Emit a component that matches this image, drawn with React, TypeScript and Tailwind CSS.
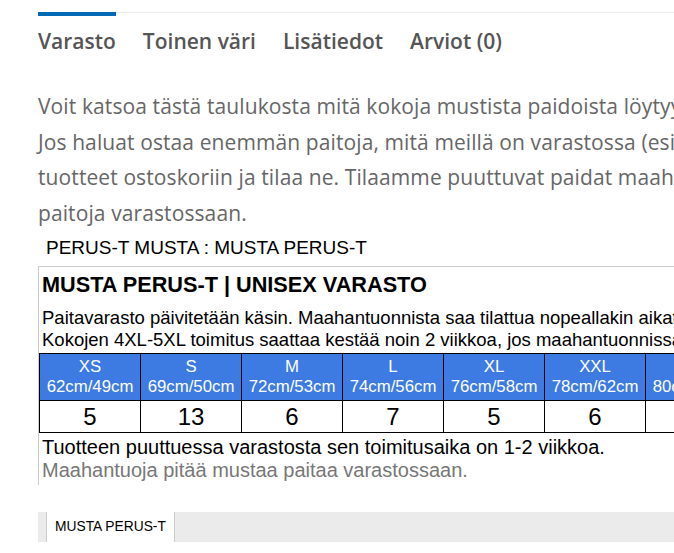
import React from 'react'

const sizes = [
  { size: 'XS', dims: '62cm/49cm', stock: '5' },
  { size: 'S', dims: '69cm/50cm', stock: '13' },
  { size: 'M', dims: '72cm/53cm', stock: '6' },
  { size: 'L', dims: '74cm/56cm', stock: '7' },
  { size: 'XL', dims: '76cm/58cm', stock: '5' },
  { size: 'XXL', dims: '78cm/62cm', stock: '6' },
  { size: '3XL', dims: '80cm/66cm', stock: '' },
  { size: '4XL', dims: '82cm/70cm', stock: '' },
]

const tabs = ['Varasto', 'Toinen väri', 'Lisätiedot', 'Arviot (0)']

export default function App() {
  return (
    <div className="h-[553px] w-[674px] overflow-hidden bg-white">
      <div className="w-[900px] pl-[38px]">
        {/* tabs */}
        <div className="mt-[12px] h-px w-full bg-[#ececec]" />
        <div className="flex gap-[27px] font-['Open_Sans',sans-serif] text-[21px] font-semibold leading-[30px] text-[#555]">
          {tabs.map((tab, i) => (
            <div key={tab} className="relative pt-[13px]">
              {i === 0 && <div className="absolute -top-px left-0 h-[4px] w-full bg-[#0068b4]" />}
              {tab}
            </div>
          ))}
        </div>

        {/* intro */}
        <div className="mt-[33px] whitespace-nowrap font-['Open_Sans',sans-serif] text-[21px] leading-[35.5px] tracking-[0.1px] text-[#666]">
          <p>Voit katsoa tästä taulukosta mitä kokoja mustista paidoista löytyy varastostamme.</p>
          <p>Jos haluat ostaa enemmän paitoja, mitä meillä on varastossa (esim. 20 kpl), lisää</p>
          <p>tuotteet ostoskoriin ja tilaa ne. Tilaamme puuttuvat paidat maahantuojalta, joka pitää</p>
          <p>paitoja varastossaan.</p>
        </div>

        <div className="mt-[6px] pl-[8px] font-['Liberation_Sans',Arial,sans-serif] text-[19px] leading-[22px] text-black">
          PERUS-T MUSTA : MUSTA PERUS-T
        </div>

        {/* stock box */}
        <div className="mt-[7px] border-l border-t border-[#ccc] pb-[3px] font-['Liberation_Sans',Arial,sans-serif] whitespace-nowrap text-black">
          <div className="pl-[3px] pt-[6px] text-[21.7px] font-bold leading-[24px]">MUSTA PERUS-T | UNISEX VARASTO</div>
          <div className="mt-[10px] pl-[3px] text-[18.5px] leading-[22px]">
            <p>Paitavarasto päivitetään käsin. Maahantuonnista saa tilattua nopeallakin aikataululla.</p>
            <p>Kokojen 4XL-5XL toimitus saattaa kestää noin 2 viikkoa, jos maahantuonnissa on niitä.</p>
          </div>
          <table className="mt-[2px] border-collapse">
            <thead>
              <tr className="bg-[#3d7be2] text-white">
                {sizes.map((s) => (
                  <th key={s.size} className="h-[47px] w-[101px] border border-black p-0 text-center text-[16.8px] font-normal leading-[20px]">
                    <div>{s.size}</div>
                    <div>{s.dims}</div>
                  </th>
                ))}
              </tr>
            </thead>
            <tbody>
              <tr>
                {sizes.map((s) => (
                  <td key={s.size} className="h-[32px] border border-black p-0 text-center text-[24px] leading-[28px]">
                    {s.stock}
                  </td>
                ))}
              </tr>
            </tbody>
          </table>
          <div className="pl-[3px] pt-[3px] text-[20px] leading-[23px]">
            <p>Tuotteen puuttuessa varastosta sen toimitusaika on 1-2 viikkoa.</p>
            <p className="text-[#777]">Maahantuoja pitää mustaa paitaa varastossaan.</p>
          </div>
        </div>

        {/* bottom tab strip */}
        <div className="mt-[27px] flex h-[30px] bg-[#ebebeb] pl-[8px] font-['Liberation_Sans',Arial,sans-serif]">
          <div className="flex items-center border-x border-[#ccc] bg-white px-[8px] text-[13.8px] text-black">
            MUSTA PERUS-T
          </div>
        </div>
      </div>
    </div>
  )
}
